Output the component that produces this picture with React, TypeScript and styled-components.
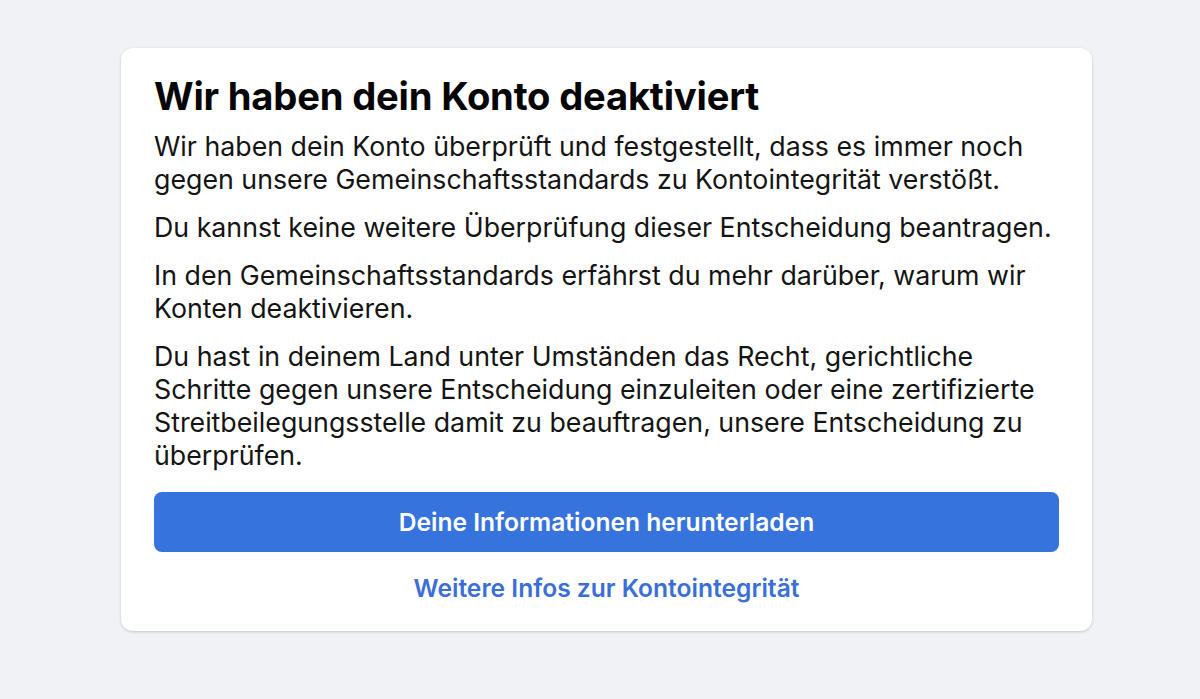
import React from "react";
import styled, { createGlobalStyle } from "styled-components";

const Global = createGlobalStyle`
  html, body { margin: 0; padding: 0; background: #f0f2f5; }
  body { font-family: Inter, "Noto Sans", sans-serif; -webkit-font-smoothing: antialiased; }
`;

const Page = styled.div`
  min-height: 699px;
  padding-top: 48px;
  box-sizing: border-box;
  display: flex;
  justify-content: center;
  align-items: flex-start;
`;

const Card = styled.div`
  width: 971px;
  margin-left: 13px;
  box-sizing: border-box;
  background: #fff;
  border-radius: 12px;
  box-shadow: 0 1px 3px rgba(0, 0, 0, 0.18);
  padding: 26px 33px 28px;
  display: flex;
  flex-direction: column;
`;

const Title = styled.h1`
  margin: 0 0 12px;
  font-size: 38.2px;
  line-height: 44px;
  font-weight: 700;
  color: #050505;
  letter-spacing: -0.2px;
`;

const Para = styled.p`
  margin: 0 0 15px;
  font-size: 26.75px;
  line-height: 33px;
  color: #141414;
  font-weight: 400;
`;

const PrimaryButton = styled.button`
  margin-top: 5px;
  height: 60px;
  border: none;
  border-radius: 8px;
  background: #3673dc;
  color: #fff;
  font-family: inherit;
  font-size: 24.6px;
  font-weight: 600;
  cursor: pointer;
`;

const LinkText = styled.a`
  margin-top: 21px;
  align-self: center;
  color: #3a6fd8;
  font-size: 24.6px;
  line-height: 30px;
  font-weight: 600;
  text-decoration: none;
`;

export default function App() {
  return (
    <>
      <Global />
      <Page>
        <Card>
          <Title>Wir haben dein Konto deaktiviert</Title>
          <Para>
            Wir haben dein Konto überprüft und festgestellt, dass es immer noch
            gegen unsere Gemeinschaftsstandards zu Kontointegrität verstößt.
          </Para>
          <Para>Du kannst keine weitere Überprüfung dieser Entscheidung beantragen.</Para>
          <Para>
            In den Gemeinschaftsstandards erfährst du mehr darüber, warum wir
            Konten deaktivieren.
          </Para>
          <Para>
            Du hast in deinem Land unter Umständen das Recht, gerichtliche
            Schritte gegen unsere Entscheidung einzuleiten oder eine zertifizierte
            Streitbeilegungsstelle damit zu beauftragen, unsere Entscheidung zu
            überprüfen.
          </Para>
          <PrimaryButton>Deine Informationen herunterladen</PrimaryButton>
          <LinkText href="#">Weitere Infos zur Kontointegrität</LinkText>
        </Card>
      </Page>
    </>
  );
}
